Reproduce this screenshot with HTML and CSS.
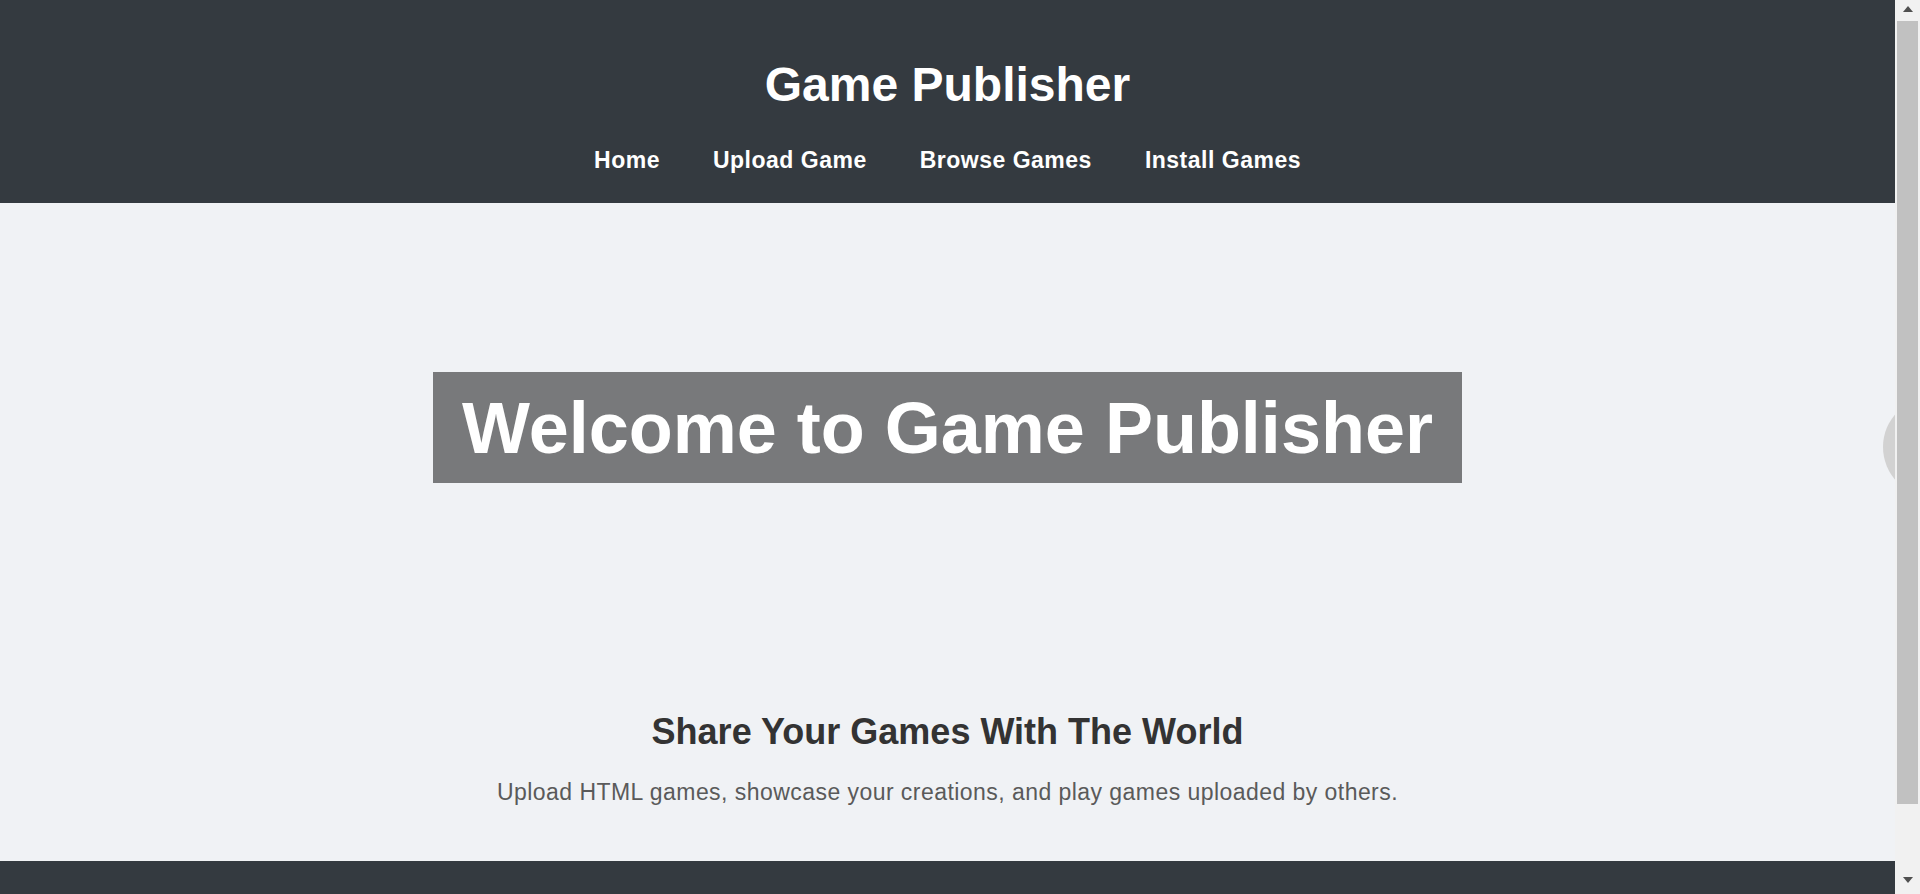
FILE: index.html
```html
<!DOCTYPE html>
<html lang="en">
<head>
<meta charset="utf-8">
<title>Game Publisher</title>
<link rel="stylesheet" href="styles.css">
</head>
<body>
<header class="site-header">
  <h1 class="site-title">Game Publisher</h1>
  <nav class="main-nav">
    <a href="#" class="nav-link">Home</a>
    <a href="#" class="nav-link">Upload Game</a>
    <a href="#" class="nav-link">Browse Games</a>
    <a href="#" class="nav-link">Install Games</a>
  </nav>
</header>
<main>
  <section class="hero">
    <h2 class="hero-title">Welcome to Game Publisher</h2>
  </section>
  <section class="intro">
    <h2 class="intro-title">Share Your Games With The World</h2>
    <p class="intro-text">Upload HTML games, showcase your creations, and play games uploaded by others.</p>
  </section>
</main>
<footer class="site-footer"></footer>
<button class="side-toggle" aria-label="Open panel"></button>
<div class="scroll-rail" aria-hidden="true">
  <span class="rail-btn rail-up"><span class="arrow arrow-up"></span></span>
  <span class="rail-track"><span class="rail-thumb"></span></span>
  <span class="rail-btn rail-down"><span class="arrow arrow-down"></span></span>
</div>
</body>
</html>
```
FILE: styles.css
```css
body {
  margin: 0;
  padding-right: 25px;
  background: #f0f2f5;
  font-family: "Liberation Sans", Arial, sans-serif;
  color: #333;
}

.site-header {
  background: #343a40;
  color: #fff;
  text-align: center;
  padding: 57px 0 29px;
}
.site-title {
  margin: 0;
  font-size: 48px;
  font-weight: 700;
  line-height: normal;
}
.main-nav {
  margin-top: 34.5px;
  display: flex;
  justify-content: center;
  gap: 53px;
}
.nav-link {
  color: #fff;
  text-decoration: none;
  font-size: 23px;
  font-weight: 700;
  letter-spacing: 0.5px;
  line-height: normal;
}

.hero {
  height: 450px;
  display: flex;
  align-items: center;
  justify-content: center;
}
.hero-title {
  margin: 0;
  background: #78797b;
  color: #fff;
  font-size: 72px;
  font-weight: 700;
  line-height: normal;
  padding: 15px 29px 14px;
}

.intro {
  text-align: center;
  padding: 58px 20px 55px;
}
.intro-title {
  margin: 0 0 26px;
  font-size: 36px;
  font-weight: 700;
  color: #333;
  line-height: normal;
}
.intro-text {
  margin: 0;
  font-size: 23px;
  letter-spacing: 0.45px;
  color: #5a5a5a;
  line-height: normal;
}

.site-footer {
  background: #343a40;
  height: 110px;
}

.side-toggle {
  position: fixed;
  top: 50%;
  right: -63px;
  transform: translateY(-50%);
  width: 100px;
  height: 100px;
  border: none;
  border-radius: 50%;
  background: #d2d2d2;
  padding: 0;
}

.scroll-rail {
  position: fixed;
  top: 0;
  right: 0;
  width: 25px;
  height: 100vh;
  background: #f1f1f1;
  display: flex;
  flex-direction: column;
  z-index: 10;
}
.rail-btn {
  display: flex;
  justify-content: center;
  flex: none;
}
.rail-up {
  height: 21px;
  padding-top: 6px;
  box-sizing: border-box;
}
.rail-down {
  height: 23px;
  padding-top: 6px;
  box-sizing: border-box;
}
.rail-track {
  flex: 1;
  padding: 0 2px;
}
.rail-thumb {
  display: block;
  height: 783px;
  background: #c1c1c1;
}
.arrow {
  width: 0;
  height: 0;
  border-left: 5.5px solid transparent;
  border-right: 5.5px solid transparent;
}
.arrow-up {
  border-bottom: 6px solid #505050;
}
.arrow-down {
  border-top: 6px solid #505050;
}
```
